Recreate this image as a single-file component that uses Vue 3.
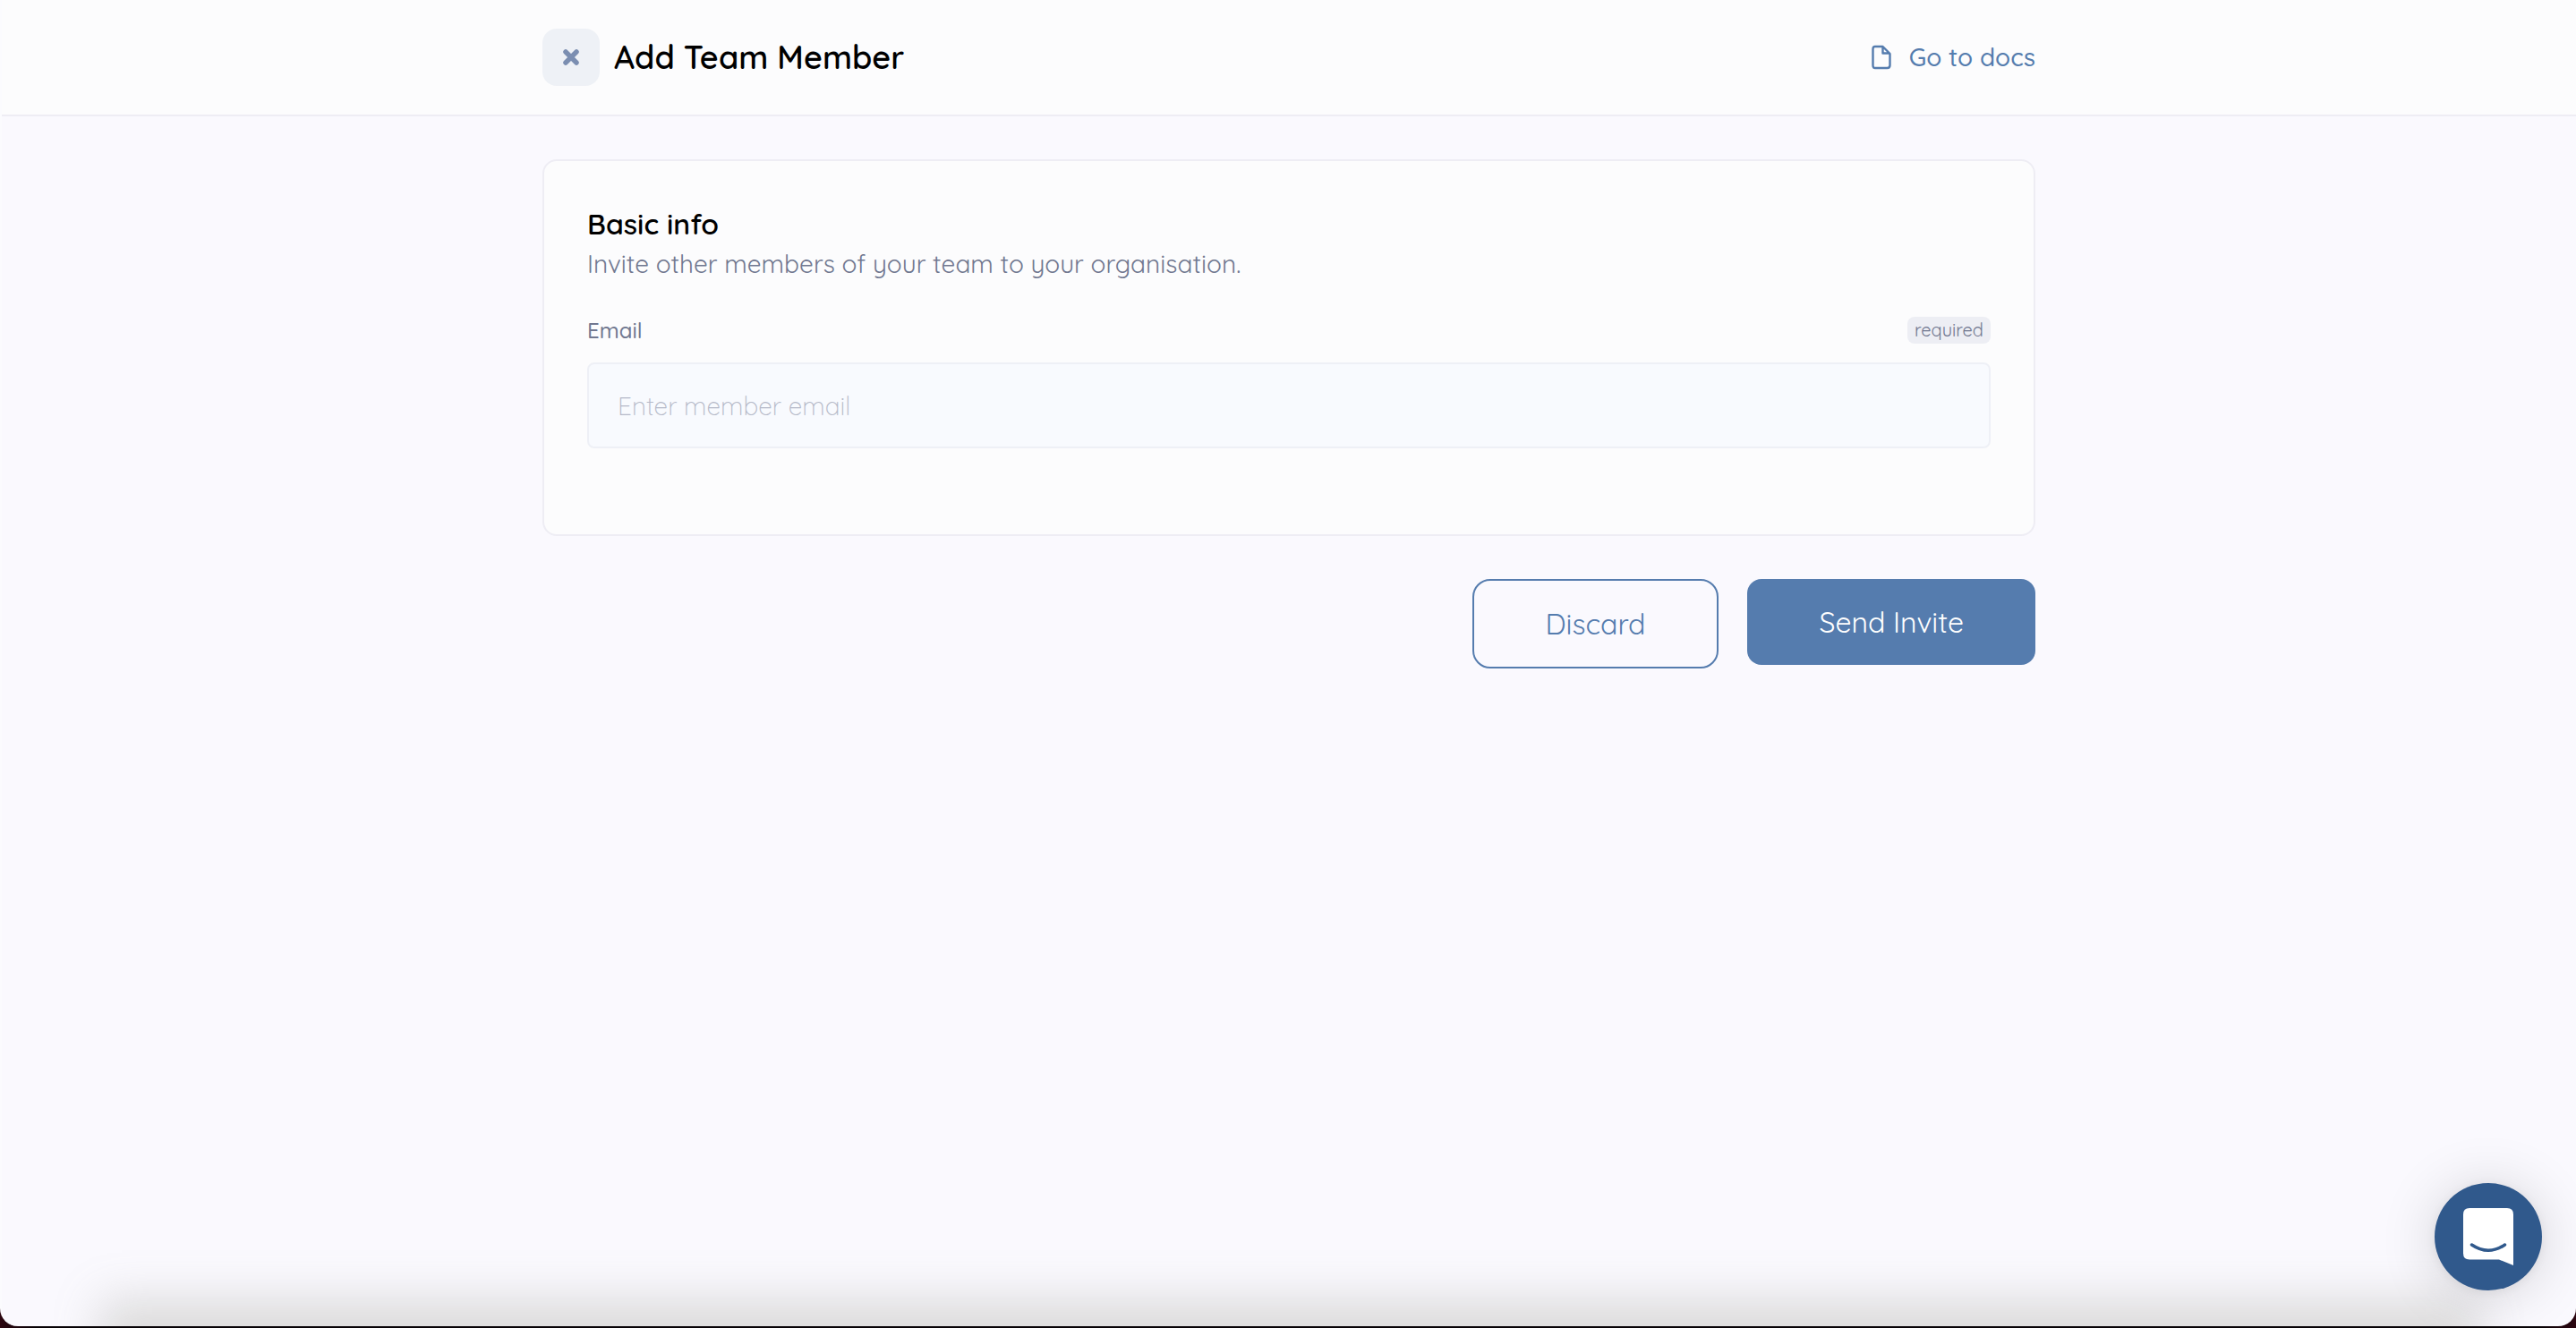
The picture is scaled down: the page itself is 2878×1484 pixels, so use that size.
<script setup>
import { ref } from 'vue'

const email = ref('')
</script>

<template>
  <div class="desktop">
    <div class="window">
      <header class="topbar">
        <div class="container topbar-row">
          <div class="heading">
            <button class="close" type="button" aria-label="Close">
              <svg viewBox="0 0 18 18" width="18" height="18" aria-hidden="true">
                <path d="M3 3 L15 15 M15 3 L3 15" fill="none" stroke="#7b8eb1" stroke-width="5.500" stroke-linecap="round" />
              </svg>
            </button>
            <h1>Add Team Member</h1>
          </div>
          <a class="docs" href="#docs">
            <svg viewBox="0 0 22 28" width="22" height="28" aria-hidden="true">
              <path d="M4 2 H12.500 L20.500 10 V23 Q20.500 26 17.500 26 H4 Q1.500 26 1.500 23 V5 Q1.500 2 4 2 Z M12.500 2 V9.500 H20.500" fill="none" stroke="#557cae" stroke-width="2.400" stroke-linejoin="round" />
            </svg>
            <span>Go to docs</span>
          </a>
        </div>
      </header>

      <main class="container">
        <form @submit.prevent>
          <section class="card">
            <h2>Basic info</h2>
            <p>Invite other members of your team to your organisation.</p>
            <div class="label-row">
              <label for="email">Email</label>
              <span class="tag">required</span>
            </div>
            <input id="email" v-model="email" type="email" placeholder="Enter member email" required />
          </section>
          <div class="actions">
            <button class="btn outline" type="button">Discard</button>
            <button class="btn solid" type="submit">Send Invite</button>
          </div>
        </form>
      </main>

      <div class="bottom-shade"></div>
      <button class="chat" type="button" aria-label="Open chat">
        <svg viewBox="0 0 56 64" width="56" height="64" aria-hidden="true">
          <path d="M7 0 H49 Q56 0 56 7 V64 L40 57.500 H7 Q0 57.500 0 50.500 V7 Q0 0 7 0 Z" fill="#fff" />
          <path d="M9.500 41 Q28 53.500 46.500 41" fill="none" stroke="#30598c" stroke-width="3.500" stroke-linecap="round" />
        </svg>
      </button>
    </div>
  </div>
</template>

<style>
body {
  margin: 0;
  background: #27040f;
}
</style>

<style scoped>
.desktop {
  box-sizing: border-box;
  height: 100vh;
  padding-bottom: 2px;
  background: linear-gradient(90deg, #2c0610, #080306 40px, #080306 calc(100% - 40px), #2c0610);
  font-family: Quicksand, Lato, "Noto Sans", sans-serif;
}

.window {
  position: relative;
  box-sizing: border-box;
  height: 100%;
  overflow: hidden;
  border-left: 2px solid #fbfbfe;
  border-radius: 0 0 20px 20px;
  background: #faf9fe;
}

.container {
  box-sizing: border-box;
  width: 58%;
  max-width: 1668px;
  margin: 0 auto;
}

.topbar {
  border-bottom: 2px solid #eeedf4;
  background: #fcfcfd;
}

.topbar-row {
  display: flex;
  align-items: center;
  justify-content: space-between;
  height: 128px;
}

.heading {
  display: flex;
  align-items: center;
  gap: 16px;
}

.close {
  display: flex;
  align-items: center;
  justify-content: center;
  width: 64px;
  height: 64px;
  padding: 0;
  border: 0;
  border-radius: 16px;
  background: #eef1f6;
}

h1,
h2,
p {
  margin: 0;
}

h1 {
  color: #000;
  font-size: 36px;
  font-weight: 600;
  line-height: 48px;
}

.docs {
  display: flex;
  align-items: center;
  gap: 20px;
  color: #557cae;
  font-size: 28px;
  font-weight: 500;
  line-height: 36px;
  text-decoration: none;
}

.card {
  margin-top: 48px;
  padding: 48px 48px 96px;
  border: 2px solid #eeedf4;
  border-radius: 16px;
  background: #fcfcfd;
}

h2 {
  color: #000;
  font-size: 32px;
  font-weight: 600;
  line-height: 44px;
}

p {
  color: #717890;
  font-size: 28px;
  line-height: 46px;
}

.label-row {
  display: flex;
  align-items: center;
  justify-content: space-between;
  margin: 35px 0 20px;
  color: #717890;
  font-size: 24px;
  line-height: 32px;
}

label {
  font-weight: 500;
}

.tag {
  padding: 0 8px;
  border-radius: 8px;
  background: #edeef4;
  font-size: 20px;
  line-height: 30px;
}

input {
  box-sizing: border-box;
  display: block;
  width: 100%;
  height: 96px;
  padding: 0 32px;
  border: 2px solid #eef0f6;
  border-radius: 8px;
  outline: 0;
  background: #f8fafe;
  color: #717890;
  font: inherit;
  font-size: 28px;
  font-weight: 300;
}

input::placeholder {
  color: #b5b9c8;
  opacity: 1;
}

.actions {
  display: flex;
  align-items: flex-start;
  justify-content: flex-end;
  gap: 32px;
  margin-top: 48px;
}

.btn {
  height: 96px;
  padding: 0 80px;
  border: 0;
  border-radius: 16px;
  font: inherit;
  font-size: 32px;
}

.outline {
  height: 100px;
  border: 2px solid #557cae;
  border-radius: 20px;
  background: transparent;
  color: #557cae;
}

.solid {
  background: #557cae;
  color: #fff;
}

.bottom-shade {
  position: absolute;
  right: 140px;
  bottom: -100px;
  left: 140px;
  height: 100px;
  box-shadow: 0 0 48px 30px rgba(142, 142, 130, 0.280);
}

.chat {
  position: absolute;
  right: 38px;
  bottom: 40px;
  display: flex;
  align-items: center;
  justify-content: center;
  width: 120px;
  height: 120px;
  padding: 0;
  border: 0;
  border-radius: 50%;
  background: #30598c;
  box-shadow: 0 2px 12px rgba(0, 0, 0, 0.060), 0 4px 64px rgba(0, 0, 0, 0.160);
}
</style>
